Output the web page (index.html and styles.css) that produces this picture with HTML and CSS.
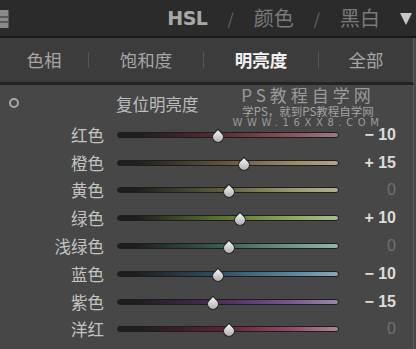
FILE: index.html
```html
<!DOCTYPE html>
<html lang="zh-CN">

<head>
    <meta charset="UTF-8">
    <meta name="viewport" content="width=device-width, initial-scale=1.0">
    <title>HSL 明亮度</title>
    <link rel="stylesheet" href="styles.css">
</head>

<body>
    <div class="panel-header">
        <div class="header-icon"><span></span><span></span></div>
        <div class="header-title">
            <span class="active">HSL</span>
            <span class="slash">/</span>
            <span>颜色</span>
            <span class="slash">/</span>
            <span>黑白</span>
        </div>
        <div class="header-arrow"></div>
    </div>

    <div class="tabs">
        <div class="tab first">色相</div>
        <div class="tab-sep"></div>
        <div class="tab mid">饱和度</div>
        <div class="tab-sep"></div>
        <div class="tab mid selected">明亮度</div>
        <div class="tab-sep"></div>
        <div class="tab last">全部</div>
    </div>

    <div class="sliders">
        <div class="reset-row">
            <div class="target-icon"></div>
            <div class="reset-label">复位明亮度</div>
            <div class="watermark">
                <div class="wm-big">PS教程自学网</div>
                <div class="wm-small">学PS，就到PS教程自学网</div>
                <div class="wm-url">WWW.16XX8.COM</div>
            </div>
        </div>

        <div class="slider-row">
            <div class="label">红色</div>
            <div class="track red"><div class="thumb" style="left: 45.5%"></div></div>
            <div class="value">− 10</div>
        </div>
        <div class="slider-row">
            <div class="label">橙色</div>
            <div class="track orange"><div class="thumb" style="left: 57.2%"></div></div>
            <div class="value">+ 15</div>
        </div>
        <div class="slider-row">
            <div class="label">黄色</div>
            <div class="track yellow"><div class="thumb" style="left: 50.5%"></div></div>
            <div class="value zero">0</div>
        </div>
        <div class="slider-row">
            <div class="label">绿色</div>
            <div class="track green"><div class="thumb" style="left: 55.3%"></div></div>
            <div class="value">+ 10</div>
        </div>
        <div class="slider-row">
            <div class="label">浅绿色</div>
            <div class="track aqua"><div class="thumb" style="left: 50.5%"></div></div>
            <div class="value zero">0</div>
        </div>
        <div class="slider-row">
            <div class="label">蓝色</div>
            <div class="track blue"><div class="thumb" style="left: 45.5%"></div></div>
            <div class="value">− 10</div>
        </div>
        <div class="slider-row">
            <div class="label">紫色</div>
            <div class="track purple"><div class="thumb" style="left: 43.2%"></div></div>
            <div class="value">− 15</div>
        </div>
        <div class="slider-row">
            <div class="label">洋红</div>
            <div class="track magenta"><div class="thumb" style="left: 50.5%"></div></div>
            <div class="value zero">0</div>
        </div>
    </div>
</body>

</html>
```

FILE: styles.css
```css
body,
html {
    margin: 0;
    padding: 0;
    width: 416px;
    height: 349px;
    overflow: hidden;
    background-color: #474747;
    font-family: "Noto Sans CJK SC", "Noto Sans", sans-serif;
}

/* top bar */
.panel-header {
    height: 36px;
    background: #2b2b2b;
    border-bottom: 2px solid #191919;
    display: flex;
    align-items: center;
}

.header-icon {
    width: 8px;
    height: 18px;
    margin-top: 2px;
    background: #8a8a8a;
    display: flex;
    flex-direction: column;
    justify-content: center;
    gap: 3px;
    box-shadow: 1px 0 0 #5a5a5a;
}

.header-icon span {
    height: 2px;
    background: #5a5a5a;
}

.header-title {
    margin-left: auto;
    display: flex;
    align-items: center;
    gap: 20px;
    font-size: 20px;
    line-height: 26px;
    color: #7a7a7a;
}

.header-title .active {
    color: #a8a8a8;
    font-family: "DejaVu Sans", sans-serif;
    font-weight: bold;
    font-size: 19px;
    letter-spacing: -0.5px;
}

.header-title .slash {
    color: #666;
    font-size: 16px;
}

.header-arrow {
    width: 0;
    height: 0;
    margin: 2px 4px 0 20px;
    border-left: 6px solid transparent;
    border-right: 6px solid transparent;
    border-top: 12px solid #c8c8c8;
}

/* tabs */
.tabs {
    height: 44px;
    background: #3c3c3c;
    border-bottom: 3px solid #232323;
    border-right: 1px solid #5c5c5c;
    margin-right: 2px;
    display: flex;
    align-items: center;
}

.tab {
    text-align: center;
    font-size: 17.5px;
    line-height: 24px;
    color: #a6a6a6;
}

.tab.first {
    width: 88px;
}

.tab.mid {
    width: 114px;
}

.tab.last {
    flex: 1;
}

.tab.selected {
    color: #f2f2f2;
    font-weight: bold;
}

.tab-sep {
    width: 1px;
    height: 16px;
    background: #555;
}

/* slider section */
.sliders {
    border-right: 1px solid #5c5c5c;
    margin-right: 2px;
    height: 264px;
}

.reset-row {
    position: relative;
    height: 36px;
    display: flex;
    align-items: center;
}

.target-icon {
    width: 6px;
    height: 6px;
    border: 2px solid #a8a8a8;
    border-radius: 50%;
    margin: 0 0 0 9px;
}

.reset-label {
    margin-left: 97px;
    margin-top: 2px;
    font-size: 16.5px;
    line-height: 20px;
    color: #bdbdbd;
}

.watermark {
    position: absolute;
    top: 1px;
    left: 230px;
    width: 156px;
    text-align: center;
    color: #a0a0a0;
}

.wm-big {
    font-size: 17px;
    line-height: 18px;
    letter-spacing: 4px;
    color: #9a9a9a;
}

.wm-small {
    font-size: 11.5px;
    line-height: 12px;
    margin-top: 1px;
    color: #a4a4a4;
}

.wm-url {
    font-family: "DejaVu Sans", sans-serif;
    font-size: 10px;
    line-height: 12px;
    letter-spacing: 4.6px;
    color: #9c9c9c;
}

.slider-row {
    height: 27.8px;
    display: grid;
    grid-template-columns: 104px 222px 44px;
    column-gap: 13px;
    align-items: center;
}

.label {
    text-align: right;
    font-size: 16.5px;
    line-height: 20px;
    color: #c4c4c4;
}

.track {
    position: relative;
    height: 4px;
    border: 1px solid #1d1d1d;
    border-radius: 3px;
    background: #222;
}

.track.red { background: linear-gradient(to right, #1e1e1e 8%, #5a2a32 45%, #8a5560 80%, #9a7a80); }
.track.orange { background: linear-gradient(to right, #1e1e1e 8%, #5e5038 45%, #9c8a68 80%, #b0a488); }
.track.yellow { background: linear-gradient(to right, #1e1e1e 8%, #5a5a38 45%, #9a9a70 80%, #b0b090); }
.track.green { background: linear-gradient(to right, #1e1e1e 8%, #56702a 45%, #8eaa5a 80%, #a8bc90); }
.track.aqua { background: linear-gradient(to right, #1e1e1e 8%, #365a4e 45%, #6e9888 80%, #94b4a8); }
.track.blue { background: linear-gradient(to right, #1e1e1e 8%, #2e4e60 45%, #5a88a0 80%, #88a8b8); }
.track.purple { background: linear-gradient(to right, #1e1e1e 8%, #4a2a58 45%, #7a5890 80%, #9a88a8); }
.track.magenta { background: linear-gradient(to right, #1e1e1e 8%, #5a2038 45%, #984a6a 80%, #a88898); }

.thumb {
    position: absolute;
    top: -2px;
    width: 10px;
    height: 10px;
    margin-left: -6px;
    background: linear-gradient(135deg, #f6f6f6, #a4a4a4);
    border: 1px solid #262626;
    border-radius: 0 50% 50% 50%;
    transform: rotate(45deg);
}

.value {
    text-align: right;
    font-family: "Liberation Sans", sans-serif;
    font-size: 16px;
    font-weight: bold;
    line-height: 18px;
    white-space: pre;
    color: #dcdcdc;
}

.value.zero {
    color: #707070;
    font-weight: normal;
}
```
